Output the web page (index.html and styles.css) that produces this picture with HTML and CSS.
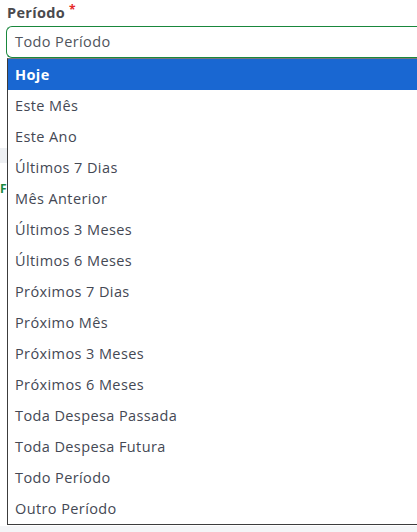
FILE: index.html
```html
<!DOCTYPE html>
<html lang="pt-BR">
<head>
  <meta charset="UTF-8" />
  <meta name="viewport" content="width=device-width, initial-scale=1.0" />
  <title>Período</title>
  <link rel="stylesheet" href="styles.css">
</head>
<body>
  <div class="card">
    <div class="field">
      <label class="field-label">Período <span class="required">*</span></label>
      <div class="select-box">Todo Período</div>
    </div>

    <div class="behind">
      <div class="behind-band"></div>
      <div class="behind-text">F</div>
    </div>

    <ul class="options">
      <li class="option selected">Hoje</li>
      <li class="option">Este Mês</li>
      <li class="option">Este Ano</li>
      <li class="option">Últimos 7 Dias</li>
      <li class="option">Mês Anterior</li>
      <li class="option">Últimos 3 Meses</li>
      <li class="option">Últimos 6 Meses</li>
      <li class="option">Próximos 7 Dias</li>
      <li class="option">Próximo Mês</li>
      <li class="option">Próximos 3 Meses</li>
      <li class="option">Próximos 6 Meses</li>
      <li class="option">Toda Despesa Passada</li>
      <li class="option">Toda Despesa Futura</li>
      <li class="option">Todo Período</li>
      <li class="option">Outro Período</li>
    </ul>
  </div>
</body>
</html>
```

FILE: styles.css
```css
:root {
  --green: rgb(25, 135, 60);
  --blue: rgb(25, 103, 210);
  --text: rgb(68, 72, 84);
  --page: rgb(244, 245, 247);
}

html, body {
  margin: 0;
  padding: 0;
  height: 100%;
  background: var(--page);
  font-family: 'Open Sans', sans-serif;
  color: var(--text);
  overflow: hidden;
}

.card {
  position: relative;
  background: white;
  height: 526px;
}

.field {
  padding: 3px 0 0 6px;
}

.field-label {
  display: block;
  font-size: 14.5px;
  font-weight: 700;
  line-height: 20px;
  letter-spacing: 0.3px;
  color: rgb(74, 74, 78);
  padding-left: 1px;
  margin-bottom: 3px;
}

.required {
  color: rgb(230, 40, 40);
  font-size: 12px;
  vertical-align: top;
  line-height: 14px;
}

.select-box {
  height: 30px;
  line-height: 30px;
  border: 1px solid var(--green);
  border-right: none;
  border-radius: 6px 0 0 6px;
  padding-left: 8px;
  font-size: 14.5px;
  letter-spacing: 0.4px;
  color: rgb(80, 84, 92);
}

.behind {
  padding-top: 90px;
}

.behind-band {
  height: 15px;
  background: rgb(238, 240, 243);
}

.behind-text {
  margin-top: 19px;
  color: var(--green);
  font-weight: 700;
  font-size: 12px;
  line-height: 14px;
}

/* native-like dropdown list lying over the form */
.options {
  position: absolute;
  top: 58px;
  left: 7px;
  right: -2px;
  margin: 0;
  padding: 0;
  list-style: none;
  background: white;
  border: 1px solid rgb(60, 60, 60);
  border-top-color: rgb(120, 120, 120);
}

.option {
  height: 31px;
  line-height: 31px;
  padding-left: 7px;
  font-size: 14.5px;
  letter-spacing: 0.4px;
  color: var(--text);
}

.option.selected {
  background: var(--blue);
  color: white;
  font-weight: 700;
}
```
